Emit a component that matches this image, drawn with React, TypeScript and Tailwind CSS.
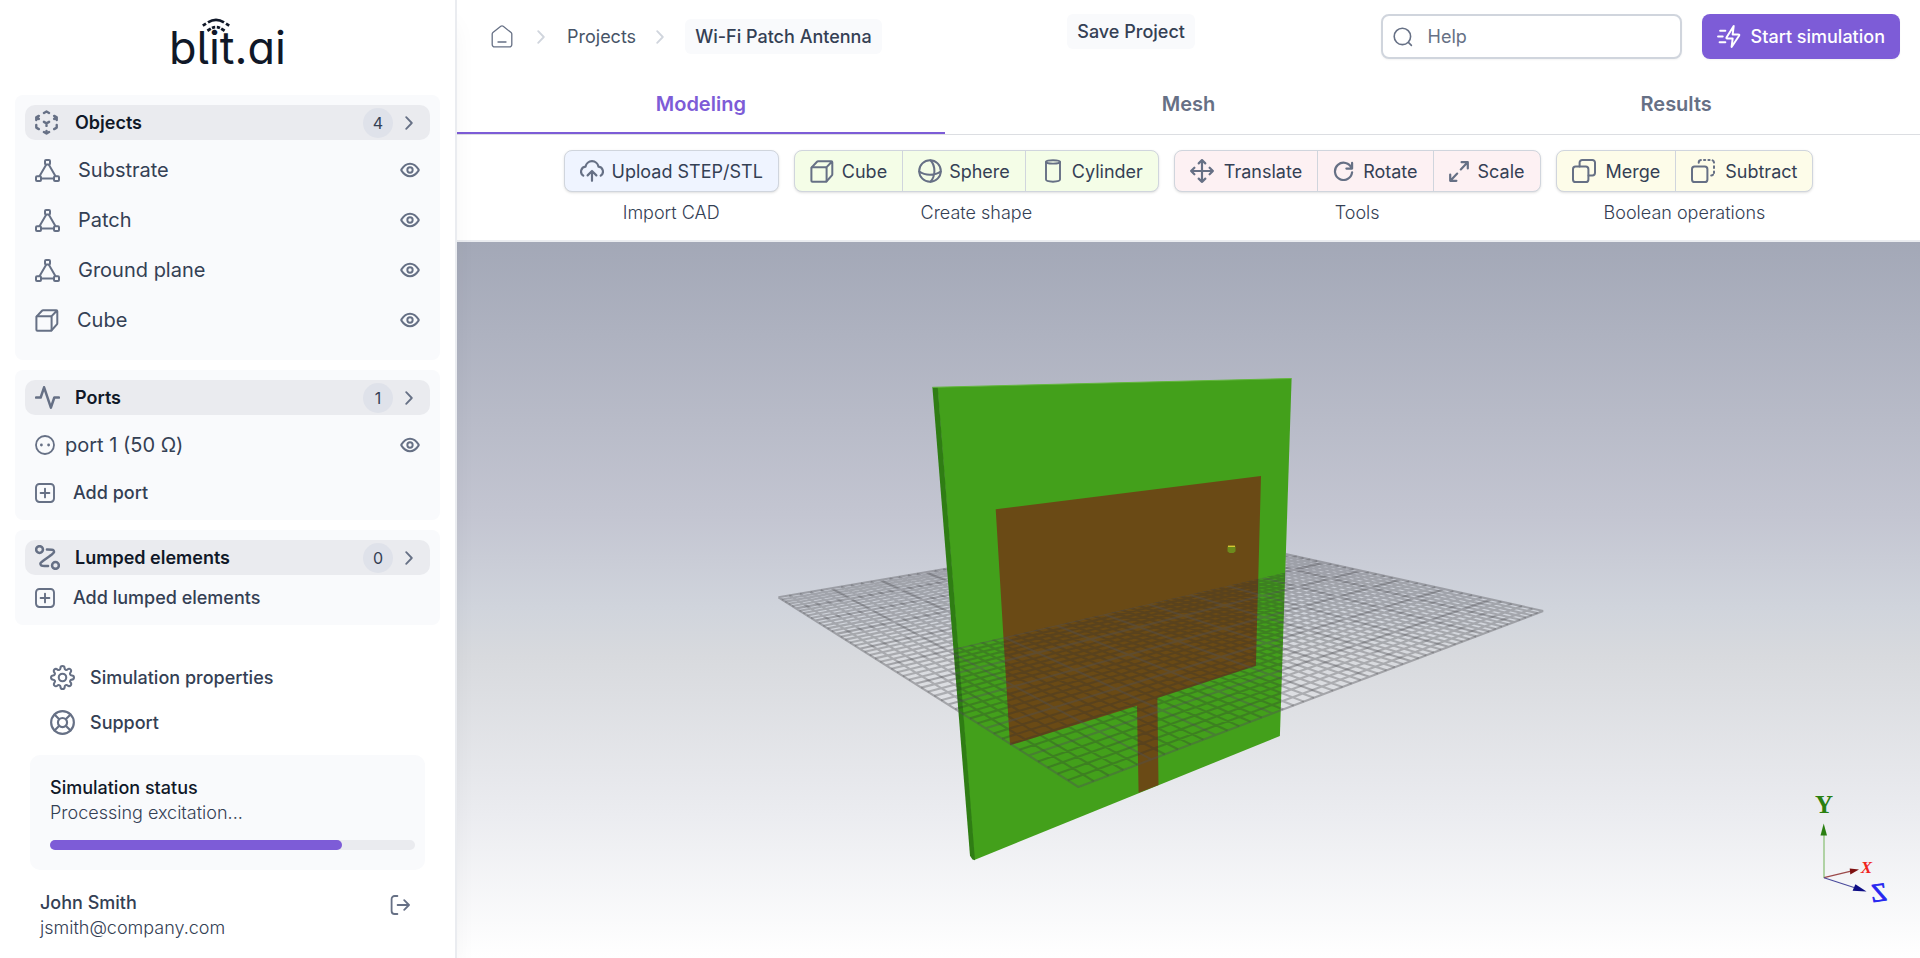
import React from "react";

type IconProps = { className?: string };

type SvgProps = IconProps & { box: string; stroke?: number; children: React.ReactNode };

function Svg({ box, className = "", stroke = 2, children }: SvgProps) {
  return (
    <svg
      viewBox={box}
      className={`shrink-0 ${className}`}
      fill="none"
      stroke="currentColor"
      strokeWidth={stroke}
      strokeLinecap="round"
      strokeLinejoin="round"
      aria-hidden="true"
    >
      {children}
    </svg>
  );
}

const DashedCubeIcon = () => (
  <Svg box="2 1 20 22" className="w-[23px] h-[25px]" stroke={2.1}>
    <path d="M21 7.5l-2.25-1.313M21 7.5v2.25m0-2.25l-2.25 1.313M3 7.5l2.25-1.313M3 7.5l2.25 1.313M3 7.5v2.25m9 3l2.25-1.313M12 12.75l-2.25-1.313M12 12.75V15m0 6.75l2.25-1.313M12 21.75V19.5m0 2.25l-2.25-1.313m0-16.875L12 2.25l2.25 1.313M21 14.25v2.25l-2.25 1.313m-13.5 0L3 16.5v-2.25" />
  </Svg>
);

const MeshIcon = () => (
  <Svg box="0 0 25 23" className="w-[25px] h-[23px]" stroke={2}>
    <rect x="10" y="1" width="5" height="4.6" rx="1" />
    <rect x="1" y="17.2" width="5" height="4.8" rx="1" />
    <rect x="19" y="17.2" width="5" height="4.8" rx="1" />
    <path d="M11 6 4.6 17M14 6l6.4 11M6.4 19.6h12.2" />
  </Svg>
);

const CubeIcon = () => (
  <Svg box="0 0 24 23" className="w-6 h-[23px]" stroke={2}>
    <path d="M2.4 7.2h13.2a1 1 0 0 1 1 1v12.6a1 1 0 0 1-1 1H2.4a1 1 0 0 1-1-1V8.2a1 1 0 0 1 1-1Z" />
    <path d="M1.7 7.4 7 1.7a1.6 1.6 0 0 1 1.1-.5h13.2a1 1 0 0 1 1 1v12.1a1.6 1.6 0 0 1-.4 1.1l-5.5 6.1M16.4 7.4l5.6-5.9" />
  </Svg>
);

const ActivityIcon = () => (
  <Svg box="1 2 22 20" className="w-[25px] h-[23px]" stroke={2.2}>
    <path d="M22 12h-4l-3 9L9 3l-3 9H2" />
  </Svg>
);

const RouteIcon = () => (
  <Svg box="1 1 22 22" className="size-[25px]" stroke={2.2}>
    <path d="M11.5 5h.434c3.048 0 4.571 0 5.15.547a2 2 0 0 1 .586 1.845c-.156.781-1.4 1.66-3.888 3.42l-4.064 2.876c-2.488 1.759-3.732 2.639-3.888 3.42a2 2 0 0 0 .586 1.845c.579.547 2.102.547 5.15.547h.934M8 5a3 3 0 1 1-6 0 3 3 0 0 1 6 0Zm14 14a3 3 0 1 1-6 0 3 3 0 0 1 6 0Z" />
  </Svg>
);

const EyeIcon = () => (
  <Svg box="1 3 22 18" className="w-5 h-4" stroke={2.2}>
    <path d="M2.42 12.713c-.136-.215-.204-.323-.242-.49a1.173 1.173 0 0 1 0-.446c.038-.167.106-.274.242-.49C3.546 9.505 6.895 5 12 5s8.455 4.505 9.58 6.287c.137.215.205.323.243.49.029.125.029.322 0 .446-.038.167-.106.274-.242.49C20.455 14.495 17.105 19 12 19c-5.106 0-8.455-4.505-9.58-6.287Z" />
    <circle cx="12" cy="12" r="3" />
  </Svg>
);

const ChevronIcon = ({ className = "" }: IconProps) => (
  <Svg box="0 0 8 14" className={`w-2 h-[14px] ${className}`} stroke={1.8}>
    <path d="M1.2 1.2 6.8 7 1.2 12.8" />
  </Svg>
);

const PortIcon = () => (
  <Svg box="0 0 20 20" className="size-5" stroke={1.8}>
    <circle cx="10" cy="10" r="9" />
    <path d="M6.4 10h.01M13.6 10h.01" strokeWidth="2.8" />
  </Svg>
);

const PlusSquareIcon = () => (
  <Svg box="0 0 20 20" className="size-5" stroke={1.9}>
    <rect x="1" y="1" width="18" height="18" rx="3.4" />
    <path d="M10 5.6v8.8M5.6 10h8.8" />
  </Svg>
);

const GearIcon = () => (
  <Svg box="0 0 24 24" className="size-[25px]">
    <circle cx="12" cy="12" r="3.6" />
    <path d="M19.4 15a1.65 1.65 0 0 0 .33 1.82l.06.06a2 2 0 0 1 0 2.83 2 2 0 0 1-2.83 0l-.06-.06a1.65 1.65 0 0 0-1.82-.33 1.65 1.65 0 0 0-1 1.51V21a2 2 0 0 1-2 2 2 2 0 0 1-2-2v-.09A1.65 1.65 0 0 0 9 19.4a1.65 1.65 0 0 0-1.82.33l-.06.06a2 2 0 0 1-2.83 0 2 2 0 0 1 0-2.83l.06-.06a1.65 1.65 0 0 0 .33-1.82 1.65 1.65 0 0 0-1.51-1H3a2 2 0 0 1-2-2 2 2 0 0 1 2-2h.09A1.65 1.65 0 0 0 4.6 9a1.65 1.65 0 0 0-.33-1.82l-.06-.06a2 2 0 0 1 0-2.83 2 2 0 0 1 2.83 0l.06.06a1.65 1.65 0 0 0 1.82.33H9a1.65 1.65 0 0 0 1-1.51V3a2 2 0 0 1 2-2 2 2 0 0 1 2 2v.09a1.65 1.65 0 0 0 1 1.51 1.65 1.65 0 0 0 1.82-.33l.06-.06a2 2 0 0 1 2.83 0 2 2 0 0 1 0 2.83l-.06.06a1.65 1.65 0 0 0-.33 1.82V9a1.65 1.65 0 0 0 1.51 1H21a2 2 0 0 1 2 2 2 2 0 0 1-2 2h-.09a1.65 1.65 0 0 0-1.51 1z" />
  </Svg>
);

const LifeBuoyIcon = () => (
  <Svg box="1 1 22 22" className="size-[25px]" stroke={1.9}>
    <circle cx="12" cy="12" r="10" />
    <circle cx="12" cy="12" r="4" />
    <path d="M9.14 9.14 4.93 4.93M4.93 19.07l4.24-4.24M14.86 14.86l4.21 4.21M19.07 4.93l-4.24 4.24" />
  </Svg>
);

const LogoutIcon = () => (
  <Svg box="0 0 20 20" className="size-5" stroke={1.8}>
    <path d="M7.4 1H4.6a3 3 0 0 0-3 3v12a3 3 0 0 0 3 3h2.8M7.6 10h11M14.2 5.2 19 10l-4.8 4.8" />
  </Svg>
);

const HomeIcon = () => (
  <Svg box="0 0 22 23" className="w-[22px] h-[23px]" stroke={1.3}>
    <path d="M1.2 9.1a2 2 0 0 1 .7-1.5l7.9-6.3a2 2 0 0 1 2.4 0l7.9 6.3a2 2 0 0 1 .7 1.5v10.4a2.4 2.4 0 0 1-2.4 2.4H3.6a2.4 2.4 0 0 1-2.4-2.4ZM7 17h8" />
  </Svg>
);

const SearchIcon = () => (
  <Svg box="0 0 20 20" className="size-5" stroke={1.6}>
    <circle cx="9.4" cy="9.4" r="8.2" />
    <path d="m15.6 15.6 2.8 2.8" />
  </Svg>
);

const FastZapIcon = () => (
  <Svg box="1 1 23 22" className="w-6 h-[23px]" stroke={1.9}>
    <path d="M9 17.5H3.5M6.5 12H2M9 6.5H4M17 2l-6.6 10.5c-.3.5-.4.7-.4.9 0 .2.1.4.3.5.2.1.5.1 1 .1H16l-1 8 7-10.5c.3-.5.4-.7.4-.9a.6.6 0 0 0-.3-.5c-.2-.1-.5-.1-1-.1H16Z" />
  </Svg>
);

const UploadIcon = () => (
  <Svg box="1 2 22 20" className="w-6 h-[22px]" stroke={2}>
    <path d="M4 16.242A4.5 4.5 0 0 1 6.08 8.02a6.001 6.001 0 0 1 11.84 0A4.5 4.5 0 0 1 20 16.242M8 16l4-4 4 4M12 12v9" />
  </Svg>
);

const SphereIcon = () => (
  <Svg box="0 0 24 24" className="size-6" stroke={2}>
    <circle cx="12" cy="12" r="10.8" />
    <path d="M12.5 1.3c2.6 2.8 3.9 6.6 3.9 10.7s-1.3 7.9-3.9 10.7M1.3 12.5c2.8 2.1 6.6 3.2 10.7 3.2s7.9-1.1 10.7-3.2" />
  </Svg>
);

const CylinderIcon = () => (
  <Svg box="0 0 16 24" className="w-4 h-6" stroke={1.9}>
    <ellipse cx="8" cy="2.9" rx="7" ry="1.7" />
    <path d="M1 3v17.6C1 22 3 22.7 8 22.7s7-.7 7-2.1V3" />
  </Svg>
);

const MoveIcon = () => (
  <Svg box="1 1 22 22" className="size-6" stroke={2}>
    <path d="M5 9l-3 3 3 3M9 5l3-3 3 3M15 19l-3 3-3-3M19 9l3 3-3 3M2 12h20M12 2v20" />
  </Svg>
);

const RotateIcon = () => (
  <Svg box="1 2 22 20" className="w-[21px] h-5" stroke={2.3}>
    <path d="M21 3.5v6h-6M20.5 9.2A9 9 0 1 0 21 13.5" />
  </Svg>
);

const ScaleIcon = () => (
  <Svg box="0 0 20 21" className="w-5 h-[21px]" stroke={2.2}>
    <path d="M12.6 1.2h6.2v6.2M18.4 1.6l-6.6 6.8M7.4 19.8H1.2v-6.2M1.6 19.4l6.6-6.8" />
  </Svg>
);

const MergeIcon = () => (
  <Svg box="0 0 24 24" className="size-6" stroke={2}>
    <rect x="1" y="7.6" width="15.4" height="15.4" rx="2.6" />
    <path d="M7.6 7.4V3.6A2.6 2.6 0 0 1 10.2 1h10.2A2.6 2.6 0 0 1 23 3.6v10.2a2.6 2.6 0 0 1-2.6 2.6h-3.8" />
  </Svg>
);

const SubtractIcon = () => (
  <Svg box="0 0 24 24" className="size-6" stroke={2}>
    <rect x="1" y="7.6" width="15.4" height="15.4" rx="2.6" />
    <path d="M7.7 3.7A2.6 2.6 0 0 1 9.9 1.1M13 1h1.2M17.4 1h1.2M21.6 1.4A2.6 2.6 0 0 1 23 3.6M23 7.2v1.8M23 12.6v1.4M22 15.7a2.6 2.6 0 0 1-1.8.7" />
  </Svg>
);

function Logo() {
  return (
    <div className="flex h-[95px] items-center justify-center">
      <span
        className="relative text-[45px] leading-[50px] text-[#101828]"
        style={{ fontFeatureSettings: '"cv11", "cv05"' }}
      >
        blit.ai
        <svg
          viewBox="0 0 28 14"
          className="absolute left-[33px] top-[-5px] h-[14px] w-7"
          fill="none"
          stroke="currentColor"
          strokeWidth="2.8"
          aria-hidden="true"
        >
          <path d="M.8 7.6 4 5.6M6 4.4Q14-.6 22 4.400M24 5.6l3.2 2" />
          <path d="M5.4 12.8 8.8 10.6M10 10Q11.800 9.200 13.200 9.100M14.800 9.100Q16.200 9.200 18 10M19.200 10.6l3.400 2.200" />
        </svg>
      </span>
    </div>
  );
}

type SectionProps = {
  title: string;
  count: number;
  icon: React.ReactNode;
  className: string;
  children: React.ReactNode;
};

function Section({ title, count, icon, className, children }: SectionProps) {
  return (
    <section className={`rounded-lg bg-[#f9fafc] px-[10px] pt-[10px] ${className}`}>
      <button
        type="button"
        className="flex h-[35px] w-full items-center rounded-[10px] bg-[#eaebef] pl-[10px] pr-[17px] text-left"
      >
        <span className="flex w-10 text-[#667085]">{icon}</span>
        <span className="flex-1 text-[18px] font-semibold text-[#101828]">{title}</span>
        <span className="flex size-[30px] items-center justify-center rounded-full bg-[#dfe2ea] text-[16px] text-[#344054]">
          {count}
        </span>
        <ChevronIcon className="ml-3 text-[#667085]" />
      </button>
      {children}
    </section>
  );
}

function ItemRow({ icon, label, gap }: { icon: React.ReactNode; label: string; gap: string }) {
  return (
    <li className={`flex h-[50px] items-center px-[10px] text-[#667085] ${gap}`}>
      {icon}
      <span className="flex-1 text-[20px] text-[#344054]">{label}</span>
      <button type="button" aria-label={`Toggle visibility of ${label}`}>
        <EyeIcon />
      </button>
    </li>
  );
}

function AddButton({ label }: { label: string }) {
  return (
    <button type="button" className="flex h-[45px] w-full items-center gap-[18px] px-[10px] text-[#667085]">
      <PlusSquareIcon />
      <span className="text-[18px] font-medium text-[#344054]">{label}</span>
    </button>
  );
}

function Sidebar() {
  return (
    <aside className="relative z-10 flex w-[457px] shrink-0 flex-col border-r-2 border-[#eaecf0] bg-white shadow-[0_20px_25px_-5px_rgba(0,0,0,0.06)]">
      <Logo />
      <div className="flex flex-col gap-[10px] px-[15px]">
        <Section title="Objects" count={4} icon={<DashedCubeIcon />} className="pb-[15px]">
          <ul className="pt-[5px]">
            <ItemRow gap="gap-[18px]" icon={<MeshIcon />} label="Substrate" />
            <ItemRow gap="gap-[18px]" icon={<MeshIcon />} label="Patch" />
            <ItemRow gap="gap-[18px]" icon={<MeshIcon />} label="Ground plane" />
            <ItemRow gap="gap-[18px]" icon={<CubeIcon />} label="Cube" />
          </ul>
        </Section>
        <Section title="Ports" count={1} icon={<ActivityIcon />} className="pb-[5px]">
          <ul className="pt-[5px]">
            <ItemRow gap="gap-[10px]" icon={<PortIcon />} label="port 1 (50 Ω)" />
          </ul>
          <AddButton label="Add port" />
        </Section>
        <Section title="Lumped elements" count={0} icon={<RouteIcon />} className="pb-[5px]">
          <AddButton label="Add lumped elements" />
        </Section>
      </div>

      <nav className="mt-[30px] flex flex-col px-[50px] text-[18px] font-medium text-[#344054]">
        <a href="#properties" className="flex h-[45px] items-center gap-[15px]">
          <span className="text-[#667085]"><GearIcon /></span>
          Simulation properties
        </a>
        <a href="#support" className="flex h-[45px] items-center gap-[15px]">
          <span className="text-[#667085]"><LifeBuoyIcon /></span>
          Support
        </a>
      </nav>

      <section className="mx-[30px] mt-[10px] rounded-[10px] bg-[#f9fafc] pb-5 pl-5 pr-[10px] pt-5 text-[18px] leading-[25px]">
        <h2 className="font-medium text-[#101828]">Simulation status</h2>
        <p className="font-light text-[#344054]">Processing excitation...</p>
        <div
          role="progressbar"
          aria-label="Simulation progress"
          aria-valuenow={80}
          className="mt-[15px] h-[10px] rounded-full bg-[#eaebef]"
        >
          <div className="h-full w-4/5 rounded-full bg-[#7d5cd7]" />
        </div>
      </section>

      <div className="flex items-start justify-between px-10 pb-4 pt-5 text-[18px] leading-[25px]">
        <div>
          <p className="font-medium text-[#344054]">John Smith</p>
          <p className="font-light text-[#344054]">jsmith@company.com</p>
        </div>
        <button type="button" aria-label="Log out" className="mr-[5px] mt-[5px] text-[#667085]">
          <LogoutIcon />
        </button>
      </div>
    </aside>
  );
}

function TopBar() {
  return (
    <header className="flex items-start justify-between pl-[34px] pr-5 pt-[14px] text-[18px]">
      <nav aria-label="Breadcrumb" className="flex h-[45px] items-center">
        <a href="#home" aria-label="Home" className="text-[#667085]"><HomeIcon /></a>
        <ChevronIcon className="ml-6 text-[#d0d5dd]" />
        <a href="#projects" className="ml-[22px] text-[#475467]">Projects</a>
        <ChevronIcon className="ml-5 text-[#d0d5dd]" />
        <span className="ml-[21px] flex h-[35px] items-center rounded-md bg-[#f9fafc] px-[10px] font-medium text-[#344054]">
          Wi-Fi Patch Antenna
        </span>
      </nav>
      <button
        type="button"
        className="h-[35px] rounded-md bg-[#f9fafc] px-[10px] font-medium text-[#344054]"
      >
        Save Project
      </button>
      <div className="flex gap-5">
        <label className="flex h-[45px] w-[301px] items-center gap-[15px] rounded-lg border-2 border-[#d0d5dd] bg-white px-[10px] text-[#667085] shadow-xs">
          <SearchIcon />
          <input
            type="search"
            aria-label="Help"
            placeholder="Help"
            className="min-w-0 flex-1 bg-transparent outline-none placeholder:text-[#667085]"
          />
        </label>
        <button
          type="button"
          className="flex h-[45px] items-center gap-[10px] rounded-lg bg-[#7d5cd7] px-[15px] font-medium text-white shadow-xs"
        >
          <FastZapIcon />
          Start simulation
        </button>
      </div>
    </header>
  );
}

function Tabs() {
  return (
    <div role="tablist" className="mt-[14px] grid grid-cols-3 border-b border-[#dcdee2] text-[20px] font-semibold text-[#667085]">
      <button type="button" role="tab" aria-selected="true" className="h-[61px] border-b-2 border-[#7d5cd7] pt-0.5 text-[#7d5cd7]">
        Modeling
      </button>
      <button type="button" role="tab" aria-selected="false" className="h-[61px] border-b-2 border-transparent pt-0.5">
        Mesh
      </button>
      <button type="button" role="tab" aria-selected="false" className="h-[61px] border-b-2 border-transparent pt-0.5">
        Results
      </button>
    </div>
  );
}

type Tool = { label: string; icon: React.ReactNode; className: string };

function ToolGroup({ caption, fill, tools }: { caption: string; fill: string; tools: Tool[] }) {
  return (
    <div className="flex flex-col items-center">
      <div className={`flex h-[42px] divide-x divide-[#d0d5dd] rounded-lg border border-[#d0d5dd] shadow-sm ${fill}`}>
        {tools.map((tool) => (
          <button
            key={tool.label}
            type="button"
            className={`flex items-center text-[18px] text-[#344054] ${tool.className}`}
          >
            <span className="text-[#667085]">{tool.icon}</span>
            {tool.label}
          </button>
        ))}
      </div>
      <span className="mt-2 text-[18px] font-light leading-[25px] text-[#344054]">{caption}</span>
    </div>
  );
}

function Toolbar() {
  return (
    <div className="flex justify-center gap-[15px] border-b-2 border-[#eaecf0] pb-[15px] pt-[15px]">
      <ToolGroup
        caption="Import CAD"
        fill="bg-[#eff4ff]"
        tools={[{ label: "Upload STEP/STL", icon: <UploadIcon />, className: "gap-2 px-[15px]" }]}
      />
      <ToolGroup
        caption="Create shape"
        fill="bg-[#f4fde7]"
        tools={[
          { label: "Cube", icon: <CubeIcon />, className: "gap-2 px-[15px]" },
          { label: "Sphere", icon: <SphereIcon />, className: "gap-[7px] px-[15px]" },
          { label: "Cylinder", icon: <CylinderIcon />, className: "gap-[11px] pl-[19px] pr-[15px]" },
        ]}
      />
      <ToolGroup
        caption="Tools"
        fill="bg-[#fdf1f3]"
        tools={[
          { label: "Translate", icon: <MoveIcon />, className: "gap-[10px] px-[15px]" },
          { label: "Rotate", icon: <RotateIcon />, className: "gap-[9px] px-[15px]" },
          { label: "Scale", icon: <ScaleIcon />, className: "gap-[9px] px-[15px]" },
        ]}
      />
      <ToolGroup
        caption="Boolean operations"
        fill="bg-[#fdfce9]"
        tools={[
          { label: "Merge", icon: <MergeIcon />, className: "gap-[10px] px-[15px]" },
          { label: "Subtract", icon: <SubtractIcon />, className: "gap-[10px] px-[15px]" },
        ]}
      />
    </div>
  );
}

type Point = [number, number];

const FLOOR: { front: Point; right: Point; back: Point; left: Point } = {
  front: [621.4, 545],
  right: [1086.2, 369],
  back: [718.7, 287.8],
  left: [321.4, 355.3],
};

// Perspective map from the unit square onto the floor quadrilateral.
function makeProjection({ front, right, back, left }: typeof FLOOR) {
  const d1: Point = [right[0] - back[0], right[1] - back[1]];
  const d2: Point = [left[0] - back[0], left[1] - back[1]];
  const s: Point = [
    front[0] - right[0] + back[0] - left[0],
    front[1] - right[1] + back[1] - left[1],
  ];
  const det = d1[0] * d2[1] - d2[0] * d1[1];
  const g = (s[0] * d2[1] - d2[0] * s[1]) / det;
  const h = (d1[0] * s[1] - s[0] * d1[1]) / det;
  return (u: number, v: number): string => {
    const w = g * u + h * v + 1;
    const at = (i: 0 | 1) =>
      ((right[i] - front[i] + g * right[i]) * u + (left[i] - front[i] + h * left[i]) * v + front[i]) / w;
    return `${at(0).toFixed(2)} ${at(1).toFixed(2)}`;
  };
}

const project = makeProjection(FLOOR);
const CELLS = 50;

function gridPath(major: boolean) {
  let d = "";
  for (let i = 0; i <= CELLS; i++) {
    if ((i % 5 === 0) !== major) continue;
    const t = i / CELLS;
    d += `M${project(t, 0)}L${project(t, 1)}M${project(0, t)}L${project(1, t)}`;
  }
  return d;
}

const MINOR = gridPath(false);
const MAJOR = gridPath(true);

function Scene() {
  return (
    <svg viewBox="0 0 1463 716" className="absolute inset-0 h-full w-full" role="img" aria-label="3D model of the patch antenna">
      <defs>
        <clipPath id="visible-floor">
          <path
            clipRule="evenodd"
            d="M0 0H1463V716H0ZM475.4 145.3 834.6 136.5 828.2 330.7 500 406 496.4 406Z"
          />
        </clipPath>
      </defs>
      <path d="M480.5 145.3 834.6 136.5 822.9 494 517.3 618Z" fill="#43a01b" />
      <path d="M475.4 145.3H480.8L518 618.3 515.5 617.5 513 613.7Z" fill="#2f7d14" />
      <path d="M475.4 145.3 834.6 136.5" stroke="#62b63c" strokeWidth="1" />
      <path
        d="M538.7 267.3 804 234 798.9 423.7 700.4 456 701.5 543 681.6 550.7 680 463.7 553 503.3Z"
        fill="#6a4a15"
      />
      <path d="M770.5 304.5h8v5l-2 1.5h-4l-2-1.5Z" fill="#6c8a1c" />
      <path d="M771 304.3h7" stroke="#d4c832" strokeWidth="1.4" />
      <g clipPath="url(#visible-floor)" fill="none">
        <path d={MINOR} stroke="#2e2e33" strokeOpacity="0.28" strokeWidth="2.1" />
        <path d={MAJOR} stroke="#505054" strokeOpacity="0.4" strokeWidth="2.1" />
      </g>
    </svg>
  );
}

function AxisGizmo() {
  return (
    <svg
      viewBox="0 0 100 120"
      className="absolute bottom-12 right-5 h-[120px] w-[100px]"
      fontFamily="Liberation Serif, serif"
      fontWeight="700"
      textAnchor="middle"
      aria-hidden="true"
    >
      <path d="M24 88V44" stroke="#a9cf9c" strokeWidth="1.8" />
      <path d="M23.7 33.5 27 45.5H20.5Z" fill="#2a7f12" />
      <path d="M24 87.7 50 81.3" stroke="#9c4a4a" strokeWidth="1.2" />
      <path d="M59 79.500 50.3 84.5 49.7 78.5Z" fill="#7d1010" />
      <path d="M24 87.7 54 97.5" stroke="#4a4a9c" strokeWidth="1.2" />
      <path d="M66.5 101.5 52.6 100.7 55.4 94.2Z" fill="#0d0d85" />
      <text x="24" y="23" fontSize="25" fill="#2a8010">Y</text>
      <text x="66.5" y="83" fontSize="17" fontStyle="italic" fill="#f0241c">X</text>
      <text transform="translate(80 111) rotate(-8) scale(-1 1)" fontSize="26" fontWeight="400" fill="#2626f0" stroke="#2626f0" strokeWidth="0.8">Z</text>
    </svg>
  );
}

export default function App() {
  return (
    <div className="flex min-h-screen bg-white font-['Inter',sans-serif]">
      <Sidebar />
      <main className="flex min-w-0 flex-1 flex-col">
        <TopBar />
        <Tabs />
        <Toolbar />
        <div className="relative min-h-[400px] flex-1 overflow-hidden bg-[linear-gradient(#a3a8b7_0%,#c3c5d1_38%,#d0d4dc_51%,#d8dade_58%,#ebecf0_80%,#ffffff_100%)]">
          <Scene />
          <AxisGizmo />
        </div>
      </main>
    </div>
  );
}
